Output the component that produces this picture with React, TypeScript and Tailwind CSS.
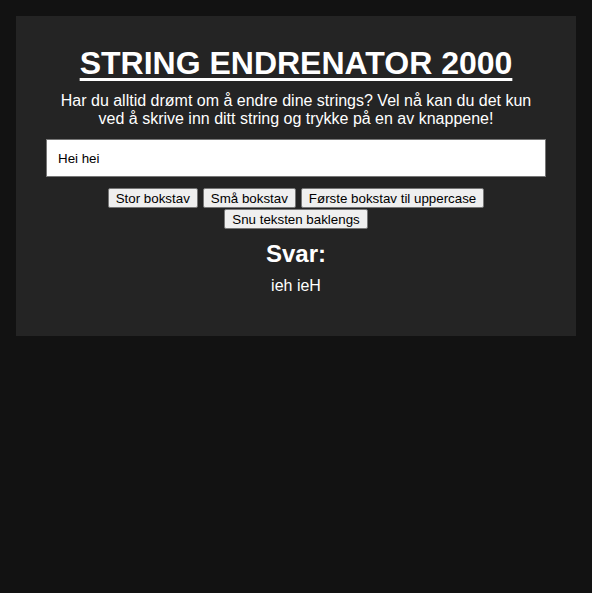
import React, { useState } from "react";

const buttonClass =
  "h-[20px] px-[7px] bg-[#efefef] border border-[#767676] rounded-[2px] text-[13.33px] leading-[15px] text-black";

export default function App() {
  const [text, setText] = useState("Hei hei");
  const [svar, setSvar] = useState("ieh ieH");

  return (
    <div
      className="min-h-[593px] bg-[#121212] p-4 text-white"
      style={{ fontFamily: '"Liberation Sans", Arial, sans-serif' }}
    >
      <div className="flex flex-col items-center bg-[#242424] pt-[28.5px] pb-[40.5px]">
        <h1 className="text-[32px] leading-[37px] font-bold underline decoration-[3px] underline-offset-[4px]">
          STRING ENDRENATOR 2000
        </h1>
        <p className="mt-[10px] w-[500px] text-center text-[16px] leading-[18.4px]">
          Har du alltid drømt om å endre dine strings? Vel nå kan du det kun
          ved å skrive inn ditt string og trykke på en av knappene!
        </p>
        <input
          value={text}
          onChange={(e) => setText(e.target.value)}
          className="mt-[11px] h-[38px] w-[500px] border border-[#767676] bg-white pl-[11px] pr-[10px] text-[13.33px] text-black outline-none"
        />
        <div className="mt-[11px] flex w-[500px] flex-wrap justify-center gap-x-[5px] gap-y-[1px]">
          <button className={buttonClass} onClick={() => setSvar(text.toUpperCase())}>
            Stor bokstav
          </button>
          <button className={buttonClass} onClick={() => setSvar(text.toLowerCase())}>
            Små bokstav
          </button>
          <button
            className={buttonClass}
            onClick={() => setSvar(text.charAt(0).toUpperCase() + text.slice(1))}
          >
            Første bokstav til uppercase
          </button>
          <button
            className={buttonClass}
            onClick={() => setSvar(text.split("").reverse().join(""))}
          >
            Snu teksten baklengs
          </button>
        </div>
        <h2 className="mt-[10.5px] text-[24px] leading-[27.6px] font-bold">Svar:</h2>
        <p className="mt-[9.5px] text-[16px] leading-[18.4px]">{svar}</p>
      </div>
    </div>
  );
}
